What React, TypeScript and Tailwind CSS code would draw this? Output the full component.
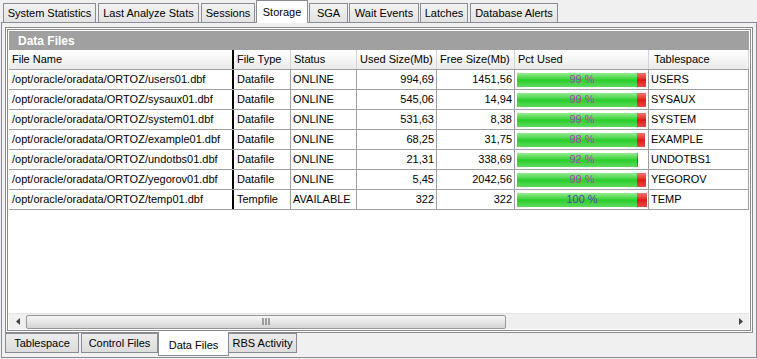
import React from "react";

type Row = { file: string; type: string; status: string; used: string; free: string; pct: number; ts: string };

const rows: Row[] = [
  { file: "/opt/oracle/oradata/ORTOZ/users01.dbf", type: "Datafile", status: "ONLINE", used: "994,69", free: "1451,56", pct: 99, ts: "USERS" },
  { file: "/opt/oracle/oradata/ORTOZ/sysaux01.dbf", type: "Datafile", status: "ONLINE", used: "545,06", free: "14,94", pct: 99, ts: "SYSAUX" },
  { file: "/opt/oracle/oradata/ORTOZ/system01.dbf", type: "Datafile", status: "ONLINE", used: "531,63", free: "8,38", pct: 99, ts: "SYSTEM" },
  { file: "/opt/oracle/oradata/ORTOZ/example01.dbf", type: "Datafile", status: "ONLINE", used: "68,25", free: "31,75", pct: 98, ts: "EXAMPLE" },
  { file: "/opt/oracle/oradata/ORTOZ/undotbs01.dbf", type: "Datafile", status: "ONLINE", used: "21,31", free: "338,69", pct: 92, ts: "UNDOTBS1" },
  { file: "/opt/oracle/oradata/ORTOZ/yegorov01.dbf", type: "Datafile", status: "ONLINE", used: "5,45", free: "2042,56", pct: 99, ts: "YEGOROV" },
  { file: "/opt/oracle/oradata/ORTOZ/temp01.dbf", type: "Tempfile", status: "AVAILABLE", used: "322", free: "322", pct: 100, ts: "TEMP" },
];

// widths + left gaps measured off the screenshot
const topTabs = [
  { label: "System Statistics", w: "w-[93px]", ml: "" },
  { label: "Last Analyze Stats", w: "w-[101px]", ml: "ml-[2px]" },
  { label: "Sessions", w: "w-[54px]", ml: "ml-[2px]" },
  { label: "Storage", w: "w-[52px]", ml: "ml-[1px]", active: true },
  { label: "SGA", w: "w-[39px]", ml: "ml-[1px]" },
  { label: "Wait Events", w: "w-[70px]", ml: "ml-[1px]" },
  { label: "Latches", w: "w-[48px]", ml: "ml-[1px]" },
  { label: "Database Alerts", w: "w-[88px]", ml: "ml-[2px]" },
];

const BAR_W = 130;
const WARN = 92;

function PctBar({ pct }: { pct: number }) {
  const green = Math.round((Math.min(pct, WARN) / 100) * BAR_W);
  const red = pct > WARN ? Math.round(((pct - WARN) / 100) * BAR_W) : 1;
  return (
    <div className="relative ml-[2px] flex h-[14px] w-[130px]">
      <div className="h-full bg-linear-to-b from-[#90ea90] via-[#26cf26] to-[#5ad95a]" style={{ width: green }} />
      <div className="h-full bg-linear-to-b from-[#f27070] via-[#e01414] to-[#e84848]" style={{ width: red }} />
      <span className={`absolute inset-0 flex items-center justify-center text-[11px] leading-none ${pct === 100 ? "text-[#5a3cb4]" : "text-[#b23cc0]"}`}>
        {pct} %
      </span>
    </div>
  );
}

const cols = [
  { h: "File Name", w: "w-[225px]", b: "border-r-2 border-r-black" },
  { h: "File Type", w: "w-[57px]", b: "border-r border-r-[#a0a0a0]" },
  { h: "Status", w: "w-[66px]", b: "border-r border-r-[#a0a0a0]" },
  { h: "Used Size(Mb)", w: "w-[80px]", b: "border-r border-r-[#a0a0a0]" },
  { h: "Free Size(Mb)", w: "w-[78px]", b: "border-r border-r-[#a0a0a0]" },
  { h: "Pct Used", w: "w-[134px]", b: "border-r border-r-[#a0a0a0]" },
  { h: "Tablespace", w: "w-[100px]", b: "border-r border-r-[#a0a0a0]" },
];

export default function App() {
  return (
    <div className="h-[359px] w-[757px] overflow-hidden bg-[#f0f0f0] font-['Liberation_Sans',Arial,sans-serif] text-[11px] text-black">
      {/* top tabs */}
      <div className="flex h-[22px] items-end pl-[3px]">
        {topTabs.map(t =>
          t.active ? (
            <div key={t.label} className={`relative z-10 -mb-px flex h-[23px] ${t.w} ${t.ml} items-start justify-center border border-b-0 border-[#898c95] bg-white pt-[3px]`}>
              {t.label}
            </div>
          ) : (
            <div key={t.label} className={`flex h-[19px] ${t.w} ${t.ml} items-center justify-center border border-b-0 border-[#898c95] bg-linear-to-b from-[#f2f2f2] to-[#e3e3e3] pt-[1px]`}>
              {t.label}
            </div>
          )
        )}
      </div>

      {/* outer panel */}
      <div className="ml-[1px] flex h-[336px] w-[756px] flex-col border border-[#898c95] bg-[#f0f0f0]">
        <div className="mx-[3px] mt-[4px] flex h-[306px] flex-col border-[3px] border-double border-[#8a8a8a] bg-white p-[1px]">
          <div className="flex h-[19px] shrink-0 items-center bg-[#a0a0a0] pl-[9px] text-[12px] font-bold text-white">Data Files</div>

          {/* header */}
          <div className="flex h-[20px] shrink-0 border-b border-b-[#a0a0a0] bg-linear-to-b from-white to-[#ebebeb]">
            {cols.map((c, i) => (
              <div
                key={c.h}
                className={`flex ${c.w} items-center px-[3px] ${i === 0 ? c.b : "border-r border-r-[#d5d5d5]"} ${c.h === "Tablespace" ? "pl-[5px]" : ""}`}
              >
                {c.h}
              </div>
            ))}
          </div>

          {rows.map(r => (
            <div key={r.file} className="flex h-[20px] shrink-0 border-b border-b-[#a0a0a0]">
              <div className={`flex ${cols[0].w} ${cols[0].b} items-center px-[3px]`}>{r.file}</div>
              <div className={`flex ${cols[1].w} ${cols[1].b} items-center px-[3px]`}>{r.type}</div>
              <div className={`flex ${cols[2].w} ${cols[2].b} items-center px-[2px]`}>{r.status}</div>
              <div className={`flex ${cols[3].w} ${cols[3].b} items-center justify-end pr-[2px]`}>{r.used}</div>
              <div className={`flex ${cols[4].w} ${cols[4].b} items-center justify-end pr-[2px]`}>{r.free}</div>
              <div className={`flex ${cols[5].w} ${cols[5].b} items-center`}>
                <PctBar pct={r.pct} />
              </div>
              <div className={`flex ${cols[6].w} ${cols[6].b} items-center px-[2px]`}>{r.ts}</div>
            </div>
          ))}

          <div className="flex-1" />

          {/* horizontal scrollbar */}
          <div className="flex h-[16px] shrink-0 items-center border-t border-t-[#e4e4e4] bg-[#efefef]">
            <div className="flex h-full w-[17px] items-center justify-center">
              <svg width="4" height="7" viewBox="0 0 4 7"><path d="M4 0 L0 3.5 L4 7 Z" fill="#444" /></svg>
            </div>
            <div className="flex h-[14px] w-[480px] items-center justify-center rounded-[2px] border border-[#979797] bg-linear-to-b from-[#f6f6f6] via-[#e6e6e6] to-[#d3d3d3]">
              <svg width="8" height="7" viewBox="0 0 8 7">
                <path d="M1 0v7M4 0v7M7 0v7" stroke="#555" strokeWidth="1" />
              </svg>
            </div>
            <div className="flex-1" />
            <div className="flex h-full w-[17px] items-center justify-center">
              <svg width="4" height="7" viewBox="0 0 4 7"><path d="M0 0 L4 3.5 L0 7 Z" fill="#444" /></svg>
            </div>
          </div>
        </div>

        {/* bottom tabs */}
        <div className="ml-[3px] flex items-start">
          <div className="flex h-[20px] w-[74px] items-center justify-center border border-[#898c95] bg-linear-to-b from-[#ececec] to-[#dcdcdc]">Tablespace</div>
          <div className="ml-[2px] flex h-[20px] w-[77px] items-center justify-center border border-[#898c95] bg-linear-to-b from-[#ececec] to-[#dcdcdc]">Control Files</div>
          <div className="relative z-10 -mt-[1px] flex h-[24px] w-[71px] items-center justify-center border border-t-0 border-[#898c95] bg-white pt-[3px]">Data Files</div>
          <div className="flex h-[20px] w-[68px] items-center justify-center border border-l-0 border-[#898c95] bg-linear-to-b from-[#ececec] to-[#dcdcdc]">RBS Activity</div>
        </div>
      </div>
    </div>
  );
}
